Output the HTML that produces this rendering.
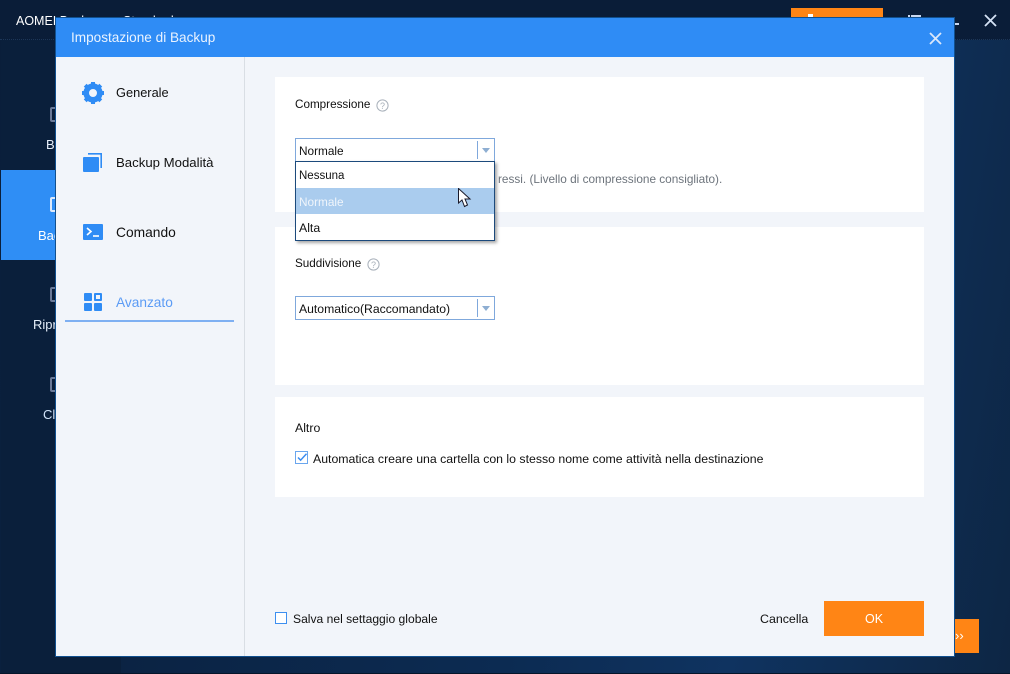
<!DOCTYPE html>
<html><head><meta charset="utf-8">
<style>
html,body{margin:0;padding:0;width:1010px;height:674px;overflow:hidden}
body{position:relative;background:#0b2342;font-family:"Liberation Sans","DejaVu Sans",sans-serif;font-size:12px;color:#111}
.a{position:absolute}
.t{position:absolute;white-space:nowrap;line-height:16px}
#bg{left:0;top:0;width:1010px;height:674px;background:linear-gradient(100deg,#0a1e3a 0%,#0c2b52 55%,#0f3360 75%,#0d2644 100%)}
#side{left:1px;top:40px;width:120px;height:633px;background:#0a1f3b}
#top{left:0;top:0;width:1010px;height:39px;background:#0a1d38;border-bottom:1px dotted #1c3658}
#dlg{left:55px;top:17px;width:898px;height:638px;border:1px solid #11508f;background:#f2f5fa;overflow:hidden}
.p{position:absolute;background:#fff;left:219px;width:649px}
.sel{position:absolute;box-sizing:border-box;width:200px;height:24px;left:239px;background:#fff;border:1px solid #7fa8dc}
.sel i{position:absolute;left:181px;top:2px;width:1px;height:18px;background:#7fa8dc}
.sel b{position:absolute;left:186px;top:9px;width:0;height:0;border-left:4.5px solid transparent;border-right:4.5px solid transparent;border-top:5px solid #8eaed2}
</style></head>
<body>
<div class="a" id="bg"></div>
<div class="a" id="side"></div>
<div class="a" id="top"></div>
<div class="a" style="left:0;top:673px;width:1010px;height:1px;background:#06152a"></div>
<div class="t" style="left:16px;top:13px;color:#fff;font-size:12.5px">AOMEI Backupper Standard</div>
<div class="a" style="left:791px;top:8px;width:92px;height:12px;background:#ff8515"></div>
<div class="a" style="left:808px;top:14px;width:5px;height:5px;background:#fff"></div>
<div class="a" style="left:908px;top:15px;width:2px;height:2px;background:#c9d8f0"></div>
<div class="a" style="left:911px;top:15px;width:10px;height:2px;background:#c9d8f0"></div>
<div class="a" style="left:955px;top:23px;width:4px;height:2px;background:#c9d8f0"></div>
<svg class="a" style="left:984px;top:14px" width="13" height="13" viewBox="0 0 13 13"><path d="M1 1L12 12M12 1L1 12" stroke="#d5e2f5" stroke-width="1.8"/></svg>

<div class="a" style="left:1px;top:170px;width:55px;height:90px;background:#2f8ef5"></div>
<div class="a" style="left:50px;top:197px;width:10px;height:15px;box-sizing:border-box;border:2px solid #dce9fb;border-radius:2px"></div>
<div class="a" style="left:50px;top:107px;width:10px;height:15px;box-sizing:border-box;border:2px solid #6b7a98;border-radius:2px"></div>
<div class="a" style="left:50px;top:287px;width:10px;height:15px;box-sizing:border-box;border:2px solid #6b7a98;border-radius:2px"></div>
<div class="a" style="left:50px;top:377px;width:10px;height:15px;box-sizing:border-box;border:2px solid #6b7a98;border-radius:2px"></div>
<div class="t" style="left:46px;top:137px;color:#e6effa;font-size:13px">Backup</div>
<div class="t" style="left:38px;top:228px;color:#fff;font-size:13px">Backup</div>
<div class="t" style="left:33px;top:317px;color:#e6effa;font-size:13px">Ripristina</div>
<div class="t" style="left:43px;top:407px;color:#cfe2f8;font-size:13px">Clona</div>

<div class="a" style="left:955px;top:619px;width:24px;height:34px;background:#ff8515;color:#fff;font-size:13px;line-height:34px">››</div>

<div class="a" id="dlg">
  <div class="a" style="left:0;top:0;width:898px;height:39px;background:#2f8cf5"></div>
  <div class="t" style="left:15px;top:12px;color:#eaf3ff;font-size:13.6px">Impostazione di Backup</div>
  <svg class="a" style="left:873px;top:14px" width="13" height="13" viewBox="0 0 13 13"><path d="M1 1L12 12M12 1L1 12" stroke="#dbe8fb" stroke-width="1.8"/></svg>
  <div class="a" style="left:188px;top:39px;width:1px;height:599px;background:#d9dee4"></div>

  <svg class="a" style="left:25px;top:63px" width="24" height="24" viewBox="0 0 24 24"><circle cx="12" cy="12" r="6.8" fill="none" stroke="#2f8cf5" stroke-width="5.6"/><path d="M12 1V5M12 19V23M1 12H5M19 12H23M4.2 4.2L7 7M17 17L19.8 19.8M19.8 4.2L17 7M7 17L4.2 19.8" stroke="#2f8cf5" stroke-width="4"/></svg>
  <div class="t" style="left:60px;top:67px;font-size:12.8px">Generale</div>

  <svg class="a" style="left:27px;top:135px" width="20" height="20" viewBox="0 0 20 20"><rect x="0" y="4" width="16" height="15" rx="1" fill="#2f8cf5"/><path d="M5 .8H18.2V15" fill="none" stroke="#2f8cf5" stroke-width="1.6"/></svg>
  <div class="t" style="left:60px;top:137px;font-size:13.2px">Backup Modalità</div>

  <svg class="a" style="left:27px;top:206px" width="20" height="16" viewBox="0 0 20 16"><rect width="20" height="16" rx="1" fill="#2f8cf5"/><path d="M4 4L8 7.5L4 11" fill="none" stroke="#fff" stroke-width="1.6"/><path d="M10 12H16" stroke="#fff" stroke-width="1.6"/></svg>
  <div class="t" style="left:60px;top:207px;font-size:13.8px">Comando</div>

  <svg class="a" style="left:28px;top:275px" width="18" height="18" viewBox="0 0 18 18" fill="#2f8cf5"><rect width="8" height="8" rx="1"/><rect x="10" y="0" width="8" height="8" rx="1"/><rect x="12" y="2" width="4" height="4" fill="#f2f5fa"/><rect y="10" width="8" height="8" rx="1"/><rect x="10" y="10" width="8" height="8" rx="1"/></svg>
  <div class="t" style="left:60px;top:277px;font-size:13.7px;color:#5b9bf5">Avanzato</div>
  <div class="a" style="left:9px;top:302px;width:169px;height:2px;background:#7fb0f2"></div>

  <div class="p" style="top:59px;height:135px"></div>
  <div class="p" style="top:209px;height:158px"></div>
  <div class="p" style="top:379px;height:100px"></div>

  <div class="t" style="left:239px;top:79px;font-size:11.7px">Compressione</div>
  <svg class="a" style="left:320px;top:81px" width="13" height="13" viewBox="0 0 13 13"><circle cx="6.5" cy="6.5" r="5.6" fill="none" stroke="#a8b0ba"/><text x="6.5" y="10" text-anchor="middle" font-size="9" fill="#a8b0ba" font-family="Liberation Sans">?</text></svg>
  <div class="sel" style="top:120px"><i></i><b></b></div>
  <div class="t" style="left:243px;top:125px;font-size:11.8px">Normale</div>
  <div class="t" style="left:442px;top:153px;font-size:11.8px;color:#6d747c">ressi. (Livello di compressione consigliato).</div>

  <div class="t" style="left:239px;top:238px;font-size:11.7px">Suddivisione</div>
  <svg class="a" style="left:311px;top:240px" width="13" height="13" viewBox="0 0 13 13"><circle cx="6.5" cy="6.5" r="5.6" fill="none" stroke="#a8b0ba"/><text x="6.5" y="10" text-anchor="middle" font-size="9" fill="#a8b0ba" font-family="Liberation Sans">?</text></svg>
  <div class="sel" style="top:278px"><i></i><b></b></div>
  <div class="t" style="left:243px;top:283px;font-size:12.2px">Automatico(Raccomandato)</div>

  <div class="t" style="left:239px;top:402px;font-size:12.3px">Altro</div>
  <svg class="a" style="left:239px;top:433px" width="13" height="13" viewBox="0 0 13 13"><rect x=".5" y=".5" width="12" height="12" fill="#fff" stroke="#6aa6ee"/><path d="M3 6.5L5.6 9.2L11.5 2.8" fill="none" stroke="#3a8cf0" stroke-width="1.5"/></svg>
  <div class="t" style="left:257px;top:433px;font-size:12.3px">Automatica creare una cartella con lo stesso nome come attività nella destinazione</div>

  <div class="a" style="left:219px;top:594px;width:10px;height:10px;border:1px solid #3d8ff0;background:#fff"></div>
  <div class="t" style="left:237px;top:593px;font-size:12.1px">Salva nel settaggio globale</div>
  <div class="t" style="left:704px;top:593px;font-size:12.4px">Cancella</div>
  <div class="a" style="left:768px;top:583px;width:100px;height:35px;background:#ff8515;color:#fff;text-align:center;line-height:36px;font-size:12.5px">OK</div>
</div>

<div class="a" style="left:295px;top:161px;width:198px;height:78px;border:1px solid #1c4a7c;background:#fff;box-shadow:2px 2px 3px rgba(0,0,0,.35)">
  <div class="a" style="left:0;top:26px;width:198px;height:26px;background:#aaccee"></div>
  <div class="t" style="left:3px;top:6px;font-size:11.5px">Nessuna</div>
  <div class="t" style="left:3px;top:32px;font-size:11.8px;color:#f0f5fb">Normale</div>
  <div class="t" style="left:3px;top:58px;font-size:12.3px">Alta</div>
</div>
<svg class="a" style="left:458px;top:188px" width="14" height="20" viewBox="0 0 14 20"><path d="M.5 .5V15L4 12L6.5 18.5L9.5 17L7 11H12Z" fill="#fff" stroke="#1a1a2a" stroke-width="1"/></svg>
</body></html>
